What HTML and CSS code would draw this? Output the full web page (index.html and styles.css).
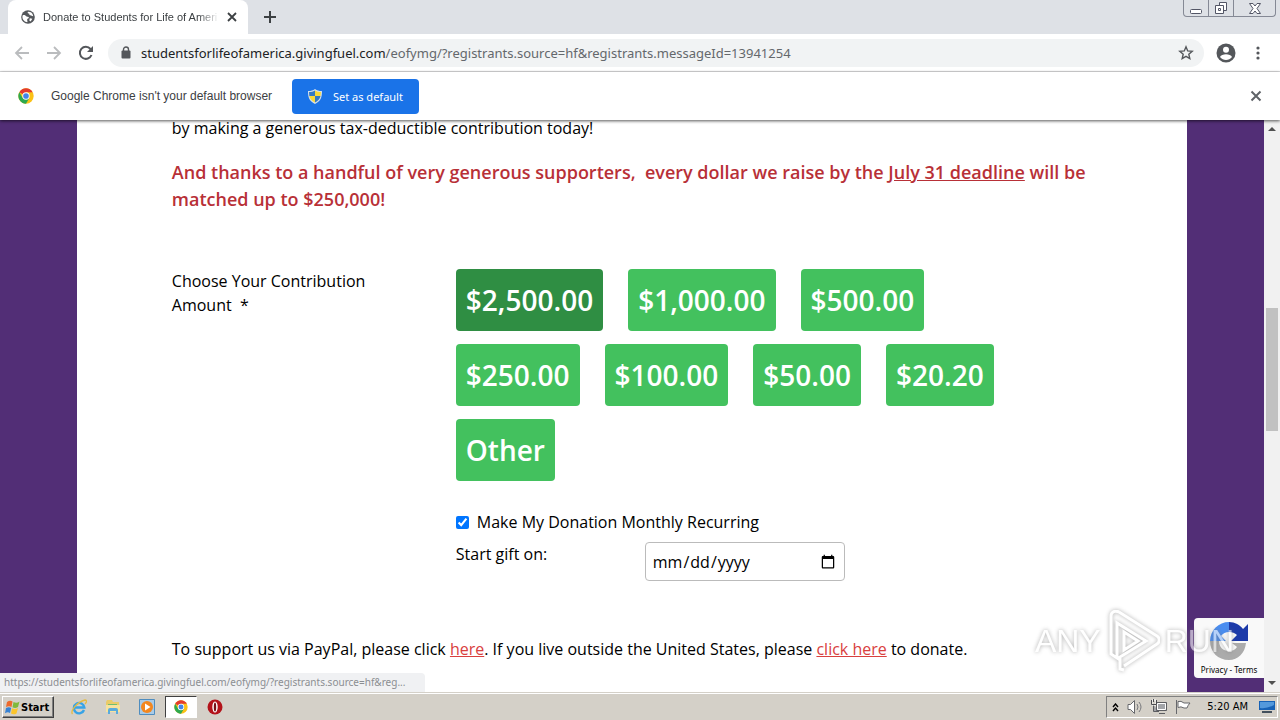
FILE: index.html
```html
<!DOCTYPE html>
<html lang="en">
<head>
<meta charset="utf-8">
<meta name="viewport" content="width=device-width, initial-scale=1">
<title>Donate to Students for Life of America</title>
<link rel="stylesheet" href="styles.css">
</head>
<body>
<header class="tab-strip">
  <div class="tab">
    <svg class="icon-14" viewBox="0 0 16 16"><circle cx="8" cy="8" r="7.800" fill="#54575b"/><path d="M2 6c2-1 3 0 4 1s3 0 3 1.500-2 1-2 2.500 1 1.500 0 3A6 6 0 0 1 2 6zM8 2c-1 1 0 2 1 2s0 2 1.500 2 2 1 3.500 1A6 6 0 0 0 8 2zM10 9.500l3 .5-2 3-1.500-1z" fill="#fff"/></svg>
    <span class="tab-title">Donate to Students for Life of Ameri</span>
    <button class="icon-button" aria-label="Close tab"><svg class="icon-10" viewBox="0 0 10 10"><path d="M1 1l8 8M9 1L1 9" stroke="#3c4043" stroke-width="1.800"/></svg></button>
  </div>
  <button class="icon-button new-tab" aria-label="New tab"><svg class="icon-12" viewBox="0 0 12 12"><path d="M6 0v12M0 6h12" stroke="#3c4043" stroke-width="2"/></svg></button>
  <div class="window-controls">
    <button class="window-button" aria-label="Minimize"><svg width="14" height="14" viewBox="0 0 14 14"><rect x="1.500" y="8.500" width="11" height="4" rx="1" fill="#fff" stroke="#535666"/></svg></button>
    <button class="window-button" aria-label="Restore"><svg width="14" height="14" viewBox="0 0 14 14"><path d="M5.500 1.500h7v8h-7z" fill="#fff" stroke="#535666"/><path d="M1.500 4.500h8v8h-8zM4.500 7.500h2v2h-2z" fill="#fff" stroke="#535666"/></svg></button>
    <button class="window-button window-close" aria-label="Close"><svg width="14" height="14" viewBox="0 0 14 14"><path d="M1.500 2.500h3.500l2 2.500 2-2.500h3.500L9 7.500l3.500 5H9L7 10l-2 2.500H1.500L5 7.500z" fill="#fff" stroke="#535666"/></svg></button>
  </div>
</header>
<nav class="toolbar">
  <button class="icon-button" aria-label="Back"><svg class="icon-16" viewBox="0 0 16 16"><path d="M15 8H2M8 2L2 8l6 6" fill="none" stroke="#babcbe" stroke-width="1.800"/></svg></button>
  <button class="icon-button" aria-label="Forward"><svg class="icon-16" viewBox="0 0 16 16"><path d="M1 8h13M8 2l6 6-6 6" fill="none" stroke="#babcbe" stroke-width="1.800"/></svg></button>
  <button class="icon-button" aria-label="Reload"><svg class="icon-16" viewBox="0 0 16 16"><path d="M13.500 10A6 6 0 1 1 12.500 4L14 5.500" fill="none" stroke="#54575b" stroke-width="2"/><path d="M15 1v6H9z" fill="#54575b"/></svg></button>
  <div class="address">
    <svg width="10" height="13" viewBox="0 0 10 13"><path d="M2.500 5V3.500a2.500 2.500 0 0 1 5 0V5" fill="none" stroke="#54575b" stroke-width="1.400"/><rect x="0.500" y="4.500" width="9" height="8" rx="1" fill="#54575b"/></svg>
    <span class="url"><span class="url-host">studentsforlifeofamerica.givingfuel.com</span>/eofymg/?registrants.source=hf&amp;registrants.messageId=13941254</span>
    <button class="icon-button" aria-label="Bookmark"><svg class="icon-16" viewBox="0 0 16 16"><path d="M8 1.800l1.700 4.100 4.500.4-3.400 2.900 1 4.400L8 11.300l-3.800 2.300 1-4.400L1.800 6.300l4.500-.4z" fill="none" stroke="#54575b" stroke-width="1.400"/></svg></button>
  </div>
  <button class="icon-button" aria-label="Profile"><svg width="20" height="20" viewBox="0 0 20 20"><circle cx="10" cy="10" r="9.500" fill="#54575b"/><circle cx="10" cy="6.700" r="3" fill="#fff"/><path d="M4 14c1.500-3.700 10.500-3.700 12 0-3 4-9 4-12 0z" fill="#fff"/></svg></button>
  <button class="icon-button menu-button" aria-label="Menu"><svg width="4" height="14" viewBox="0 0 4 14"><circle cx="2" cy="2" r="1.600" fill="#54575b"/><circle cx="2" cy="7" r="1.600" fill="#54575b"/><circle cx="2" cy="12" r="1.600" fill="#54575b"/></svg></button>
</nav>
<section class="infobar">
  <svg class="chrome-logo" viewBox="0 0 48 48"><use href="#chrome"/></svg>
  <span class="infobar-text">Google Chrome isn't your default browser</span>
  <button class="default-button">
    <svg width="14" height="15" viewBox="0 0 14 15"><path d="M7 0c2 1.500 4 2 7 2 0 6-1 10-7 13C1 12 0 8 0 2c3 0 5-.5 7-2z" fill="#d5dfe9"/><path d="M7 1.500V7H1.300L1 3c2.500 0 4-.5 6-1.500zM7 7h5.500c-.5 3-2.500 5-5.500 6.500z" fill="#3479c4"/><path d="M7 1.500C9 2.500 10.500 3 13 3l-.5 4H7zM1.300 7H7v6.500C4 12 2 10 1.300 7z" fill="#f9d939"/></svg>
    Set as default
  </button>
  <button class="icon-button infobar-close" aria-label="Dismiss"><svg class="icon-12" viewBox="0 0 12 12"><path d="M1.500 1.500l9 9M10.500 1.500l-9 9" stroke="#5f6368" stroke-width="2"/></svg></button>
</section>
<div class="viewport">
  <div class="page">
    <main class="sheet">
      <p class="intro">by making a generous tax-deductible contribution today!</p>
      <p class="match">And thanks to a handful of very generous supporters,&nbsp; every dollar we raise by the <u>July 31 deadline</u> will be matched up to $250,000!</p>
      <form class="gift">
        <div class="gift-label">Choose Your Contribution Amount&nbsp; *</div>
        <div class="gift-fields">
          <div class="amounts">
            <button type="button" class="amount amount-selected">$2,500.00</button>
            <button type="button" class="amount">$1,000.00</button>
            <button type="button" class="amount">$500.00</button>
            <button type="button" class="amount">$250.00</button>
            <button type="button" class="amount">$100.00</button>
            <button type="button" class="amount">$50.00</button>
            <button type="button" class="amount">$20.20</button>
            <button type="button" class="amount">Other</button>
          </div>
          <label class="recurring"><input type="checkbox" class="recurring-box" checked>Make My Donation Monthly Recurring</label>
          <div class="start">
            <label class="start-label" for="start-date">Start gift on:</label>
            <input class="start-date" id="start-date" type="date">
          </div>
        </div>
      </form>
      <p class="support">To support us via PayPal, please click <a class="link" href="#">here</a>. If you live outside the United States, please <a class="link" href="#">click here</a> to donate.</p>
    </main>
    <aside class="captcha">
      <svg width="40" height="38" viewBox="0 0 40 38"><path d="M20 0v10a10 10 0 0 0-8 4l5 5H1A19 19 0 0 1 20 0z" fill="#4a8df0"/><path d="M20 0c6 0 11 3 14 7l5-5v17H22l6-6c-2-2-5-3-8-3z" fill="#1c3aa9"/><path d="M1 19h9c0 6 4 10 10 10 3 0 6-1 8-4l-5-4h14C36 31 29 38 20 38 9 38 1 30 1 19z" fill="#ababab"/></svg>
      <span class="captcha-text">Privacy - Terms</span>
    </aside>
    <div class="watermark">
      <span>ANY</span>
      <svg width="54" height="62" viewBox="0 0 54 62"><path d="M13 2l38 24c3 2 3 6 0 8L18 56M13 2C9 0 5 2 5 6v38l6 4V13l29 18-26 16v12l4 1M18 22v18l14-9z" fill="none" stroke="#fff" stroke-width="3"/></svg>
      <span>RUN</span>
    </div>
    <div class="status">https://studentsforlifeofamerica.givingfuel.com/eofymg/?registrants.source=hf&amp;reg...</div>
  </div>
  <div class="scrollbar">
    <svg width="8" height="4" viewBox="0 0 8 4"><path d="M0 4l4-4 4 4z" fill="#505050"/></svg>
    <div class="scroll-track"><div class="scroll-thumb"></div></div>
    <svg width="8" height="4" viewBox="0 0 8 4"><path d="M0 0l4 4 4-4z" fill="#505050"/></svg>
  </div>
</div>
<footer class="taskbar">
  <button class="start-button"><svg width="15" height="15" viewBox="0 0 15 15"><path d="M2 2c2-1.500 4-1.500 5.500-.5L6.500 7C5 6 3 6 1 7z" fill="#ed6a2d"/><path d="M8.500 2c2 1 4 1 6-.5L13 7c-2 1.300-4 1-5.500.3z" fill="#80b93c"/><path d="M1 8c2-1.200 4-1 5.200 0L5 13c-1.500-1-3-1-5 .2z" fill="#3682d4"/><path d="M7 8.300c2 1 4 1 6-.3l-1.500 5.500c-2 1.200-4 1-5.500 0z" fill="#fbc52c"/></svg>Start</button>
  <button class="task" aria-label="Internet Explorer"><svg class="icon-16" viewBox="0 0 16 16"><path d="M13 11A5.200 5.200 0 1 1 13.300 8.500H4" fill="none" stroke="#37a3e6" stroke-width="2.400"/><path d="M1.500 15C-1 12 6 3 14 1c2 0 2 2 0 4" fill="none" stroke="#e6bb42" stroke-width="1.300"/></svg></button>
  <button class="task" aria-label="Explorer"><svg class="icon-16" viewBox="0 0 16 16"><path d="M1 3l1-2h5l1 2h6v9H1z" fill="#eacb68"/><path d="M3 5h9v3H3z" fill="#6fbe72"/><path d="M1 6h14v7H1z" fill="#f7e39d"/><path d="M3 15v-4q0-2 2-2h6q2 0 2 2v4h-2v-3H5v3z" fill="#5aabdc"/></svg></button>
  <button class="task" aria-label="Media Player"><svg class="icon-16" viewBox="0 0 16 16"><path d="M.5.500h15v15H.5z" fill="#a9cbe7" stroke="#4f8dbf"/><circle cx="8" cy="8" r="6" fill="#f3871f"/><path d="M6 4.500l5.500 3.500L6 11.500z" fill="#fff"/></svg></button>
  <button class="task task-active" aria-label="Google Chrome"><svg width="14" height="14" viewBox="0 0 48 48"><g id="chrome"><circle cx="24" cy="24" r="23" fill="#fbc116"/><path d="M24 24L4.100 12.500A23 23 0 0 1 43.900 12.500H24z" fill="#e33b2e"/><path d="M4.100 12.500A23 23 0 0 0 24 47l10-17.300L24 24l-10 5.700z" fill="#2da94f"/><circle cx="24" cy="24" r="11" fill="#fff"/><circle cx="24" cy="24" r="8.500" fill="#4285e8"/></g></svg></button>
  <button class="task" aria-label="Opera"><svg class="icon-16" viewBox="0 0 16 16"><circle cx="8" cy="8" r="7.500" fill="#b3121a"/><ellipse cx="8" cy="8" rx="2.700" ry="5.500" fill="#fff"/><ellipse cx="8" cy="8" rx="1.200" ry="4.600" fill="#761016"/></svg></button>
  <div class="tray">
    <svg width="7" height="9" viewBox="0 0 7 9"><path d="M1 4l2.500-3L6 4M1 8l2.500-3L6 8" fill="none" stroke="#000" stroke-width="1.400"/></svg>
    <svg class="icon-16" viewBox="0 0 16 16"><path d="M1 5.500h2.500l4-4v13l-4-4H1z" fill="#fff" stroke="#67686c"/><path d="M10 5q2 3 0 6M12 3q4 5 0 10" fill="none" stroke="#77787c"/></svg>
    <svg class="icon-16" viewBox="0 0 16 16"><path d="M5.500 3.500h10v8h-10zM8 14.500h6M2.500 6v6.500H8" fill="#a2a4a8" stroke="#5c5d61"/><path d="M1 1h4v5H1zM6.500 4.500h8v6h-8z" fill="none" stroke="#fff"/><path d="M.5 1v4.500h5V1M2.500 0v3" fill="none" stroke="#4b4c50"/></svg>
    <svg class="icon-16" viewBox="0 0 16 16"><path d="M1.500 1v14M3 2.500q3-1 6 1.500h6q-2 2-3 5H9Q6 7 3 8.500z" fill="#fff" stroke="#67686c"/></svg>
    <time class="clock">5:20 AM</time>
    <svg width="16" height="14" viewBox="0 0 16 14"><path d="M0 1h16v9H0z" fill="#1762b6"/><path d="M1 2h14v3Q8 9 1 8z" fill="#5399dc"/><path d="M3 12h10" stroke="#43505d" stroke-width="2"/></svg>
  </div>
</footer>
</body>
</html>
```
FILE: styles.css
```css
* { box-sizing: border-box; }
body {
  margin: 0;
  height: 100vh;
  display: flex;
  flex-direction: column;
  overflow: hidden;
  background: #fff;
  color: #000;
  font-family: "Open Sans", "Noto Sans", sans-serif;
  font-size: 16px;
  line-height: 24px;
}
p { margin: 0; }
svg { display: block; flex: none; }
button { font-family: inherit; cursor: pointer; }
.icon-10 { width: 10px; height: 10px; }
.icon-12 { width: 12px; height: 12px; }
.icon-14 { width: 14px; height: 14px; }
.icon-16 { width: 16px; height: 16px; }
.icon-button { display: flex; padding: 0; border: 0; background: none; }

.tab-strip {
  flex: none;
  height: 34px;
  display: flex;
  align-items: center;
  padding-left: 8px;
  background: #dee1e6;
  font-family: "Liberation Sans", sans-serif;
  font-size: 11px;
}
.tab {
  width: 240px;
  height: 34px;
  display: flex;
  align-items: center;
  gap: 8px;
  padding: 0 11px 0 13px;
  border-radius: 8px 8px 0 0;
  background: #fff;
  color: #3c4043;
}
.tab-title {
  flex: 1;
  min-width: 0;
  overflow: hidden;
  white-space: nowrap;
  mask-image: linear-gradient(to right, #000 88%, transparent);
}
.new-tab { margin-left: 16px; }
.window-controls {
  align-self: flex-start;
  display: flex;
  margin: 0 4px 0 auto;
  border: 1px solid #858995;
  border-top: 0;
  border-radius: 0 0 4px 4px;
}
.window-button {
  width: 25px;
  height: 16px;
  display: flex;
  align-items: center;
  justify-content: center;
  padding: 0;
  border: 0;
  border-right: 1px solid #858995;
  background: none;
}
.window-close { width: 41px; border-right: 0; }

.toolbar {
  flex: none;
  height: 38px;
  display: flex;
  align-items: center;
  gap: 16px;
  padding: 0 20px 0 14px;
  border-bottom: 1px solid #dcddde;
}
.address {
  flex: 1;
  height: 28px;
  display: flex;
  align-items: center;
  gap: 10px;
  margin: 0 -4px 0 -2px;
  padding: 0 10px 0 13px;
  border-radius: 14px;
  background: #f1f3f4;
}
.url {
  flex: 1;
  overflow: hidden;
  white-space: nowrap;
  color: #64686c;
  font-family: "Noto Sans", sans-serif;
  font-size: 13px;
}
.url-host { color: #202124; }
.menu-button { margin-left: 4px; }

.infobar {
  flex: none;
  position: relative;
  z-index: 1;
  height: 48px;
  display: flex;
  align-items: center;
  padding: 0 18px;
  background: #fff;
  box-shadow: 0 1px 3px #000a;
  color: #3c4043;
  font-family: "Noto Sans", sans-serif;
  font-size: 12px;
}
.chrome-logo { width: 16px; height: 16px; }
.infobar-text {
  min-width: 229px;
  margin: 0 12px 0 17px;
  font-family: "Liberation Sans", sans-serif;
}
.default-button {
  height: 35px;
  display: flex;
  align-items: center;
  gap: 11px;
  padding: 0 16px;
  border: 0;
  border-radius: 4px;
  background: #1a73e8;
  color: #fff;
  font-size: 11px;
}
.infobar-close { margin-left: auto; }

.viewport { flex: 1; min-height: 0; display: flex; }
.page {
  flex: 1;
  position: relative;
  overflow: hidden;
  padding: 0 6%;
  background: #522e76;
}
.sheet {
  display: flow-root;
  min-height: 100%;
  padding: 0 95px;
  background: #fff;
}
.intro { margin-top: -4px; padding-bottom: 19px; }
.match {
  color: #b83037;
  font-size: 18px;
  font-weight: 600;
  line-height: 27px;
}
.gift { display: flex; margin-top: 56px; }
.gift-label { width: 284px; padding-right: 64px; }
.gift-fields { flex: 1; }
.amounts {
  max-width: 560px;
  display: flex;
  flex-wrap: wrap;
  gap: 13px 25px;
}
.amount {
  height: 62px;
  padding: 0 10px;
  border: 0;
  border-radius: 4px;
  background: #43c15e;
  color: #fff;
  font-size: 28px;
  font-weight: 600;
}
.amount-selected { background: #2f8e43; }
.recurring { display: flex; align-items: center; gap: 8px; margin-top: 29px; }
.recurring-box { width: 13px; height: 13px; margin: 0; accent-color: #0075ff; }
.start { display: flex; margin-top: 8px; }
.start-label { width: 189px; }
.start-date {
  width: 200px;
  height: 39px;
  padding: 6px;
  border: 1px solid #bbb;
  border-radius: 4px;
  background: #fff;
  color: #000;
  font-family: inherit;
  font-size: 16px;
}
.support { margin-top: 56px; }
.link { color: #d9403e; }

.captcha {
  position: absolute;
  right: 0;
  bottom: 14px;
  width: 70px;
  height: 60px;
  display: flex;
  flex-direction: column;
  align-items: center;
  justify-content: space-between;
  padding: 4px 0 2px;
  border-radius: 4px 0 0 4px;
  background: #f9f9f9;
}
.captcha-text {
  font-family: "Noto Sans", sans-serif;
  font-size: 8px;
  line-height: 12px;
  white-space: nowrap;
}
.watermark {
  position: absolute;
  right: 30px;
  bottom: 20px;
  display: flex;
  align-items: center;
  gap: 5px;
  color: #fff;
  font-family: "Liberation Sans", sans-serif;
  font-size: 32px;
  line-height: 62px;
  opacity: 0.6;
  filter: drop-shadow(0 0 2px #777);
}
.status {
  position: absolute;
  left: 0;
  bottom: 0;
  width: 425px;
  height: 19px;
  padding-left: 4px;
  border-radius: 0 4px 0 0;
  background: #f0f1f3;
  color: #8b8e92;
  font-family: "Noto Sans", sans-serif;
  font-size: 10px;
  line-height: 19px;
  white-space: nowrap;
}
.scrollbar {
  width: 16px;
  display: flex;
  flex-direction: column;
  align-items: center;
  padding: 7px 0;
  background: #f1f1f1;
}
.scroll-track { flex: 1; align-self: stretch; padding: 177px 2px 0; }
.scroll-thumb { height: 123px; background: #c1c1c1; }

.taskbar {
  flex: none;
  height: 28px;
  display: flex;
  align-items: center;
  gap: 2px;
  padding: 1px 2px 0;
  border-top: 1px solid #d4d0c8;
  background: #d4d0c8;
  box-shadow: inset 0 1px #fff;
  font-family: "DejaVu Sans Condensed", sans-serif;
}
.start-button {
  height: 22px;
  display: flex;
  align-items: center;
  gap: 1px;
  margin-right: 7px;
  padding: 0 4px 0 2px;
  border: 1px solid;
  border-color: #fff #404040 #404040 #fff;
  background: #d4d0c8;
  box-shadow: inset -1px -1px #808080;
  font-size: 11px;
  font-weight: 700;
}
.task {
  width: 32px;
  height: 22px;
  display: flex;
  align-items: center;
  justify-content: center;
  padding: 0;
  border: 1px solid transparent;
  background: none;
}
.task-active { border-color: #404040 #fff #fff #404040; background: #fff; }
.tray {
  height: 22px;
  display: flex;
  align-items: center;
  gap: 8px;
  margin-left: auto;
  padding: 0 2px 0 5px;
  border: 1px solid;
  border-color: #808080 #fff #fff #808080;
}
.clock { margin: 0 3px 0 8px; font-size: 11px; }
```
